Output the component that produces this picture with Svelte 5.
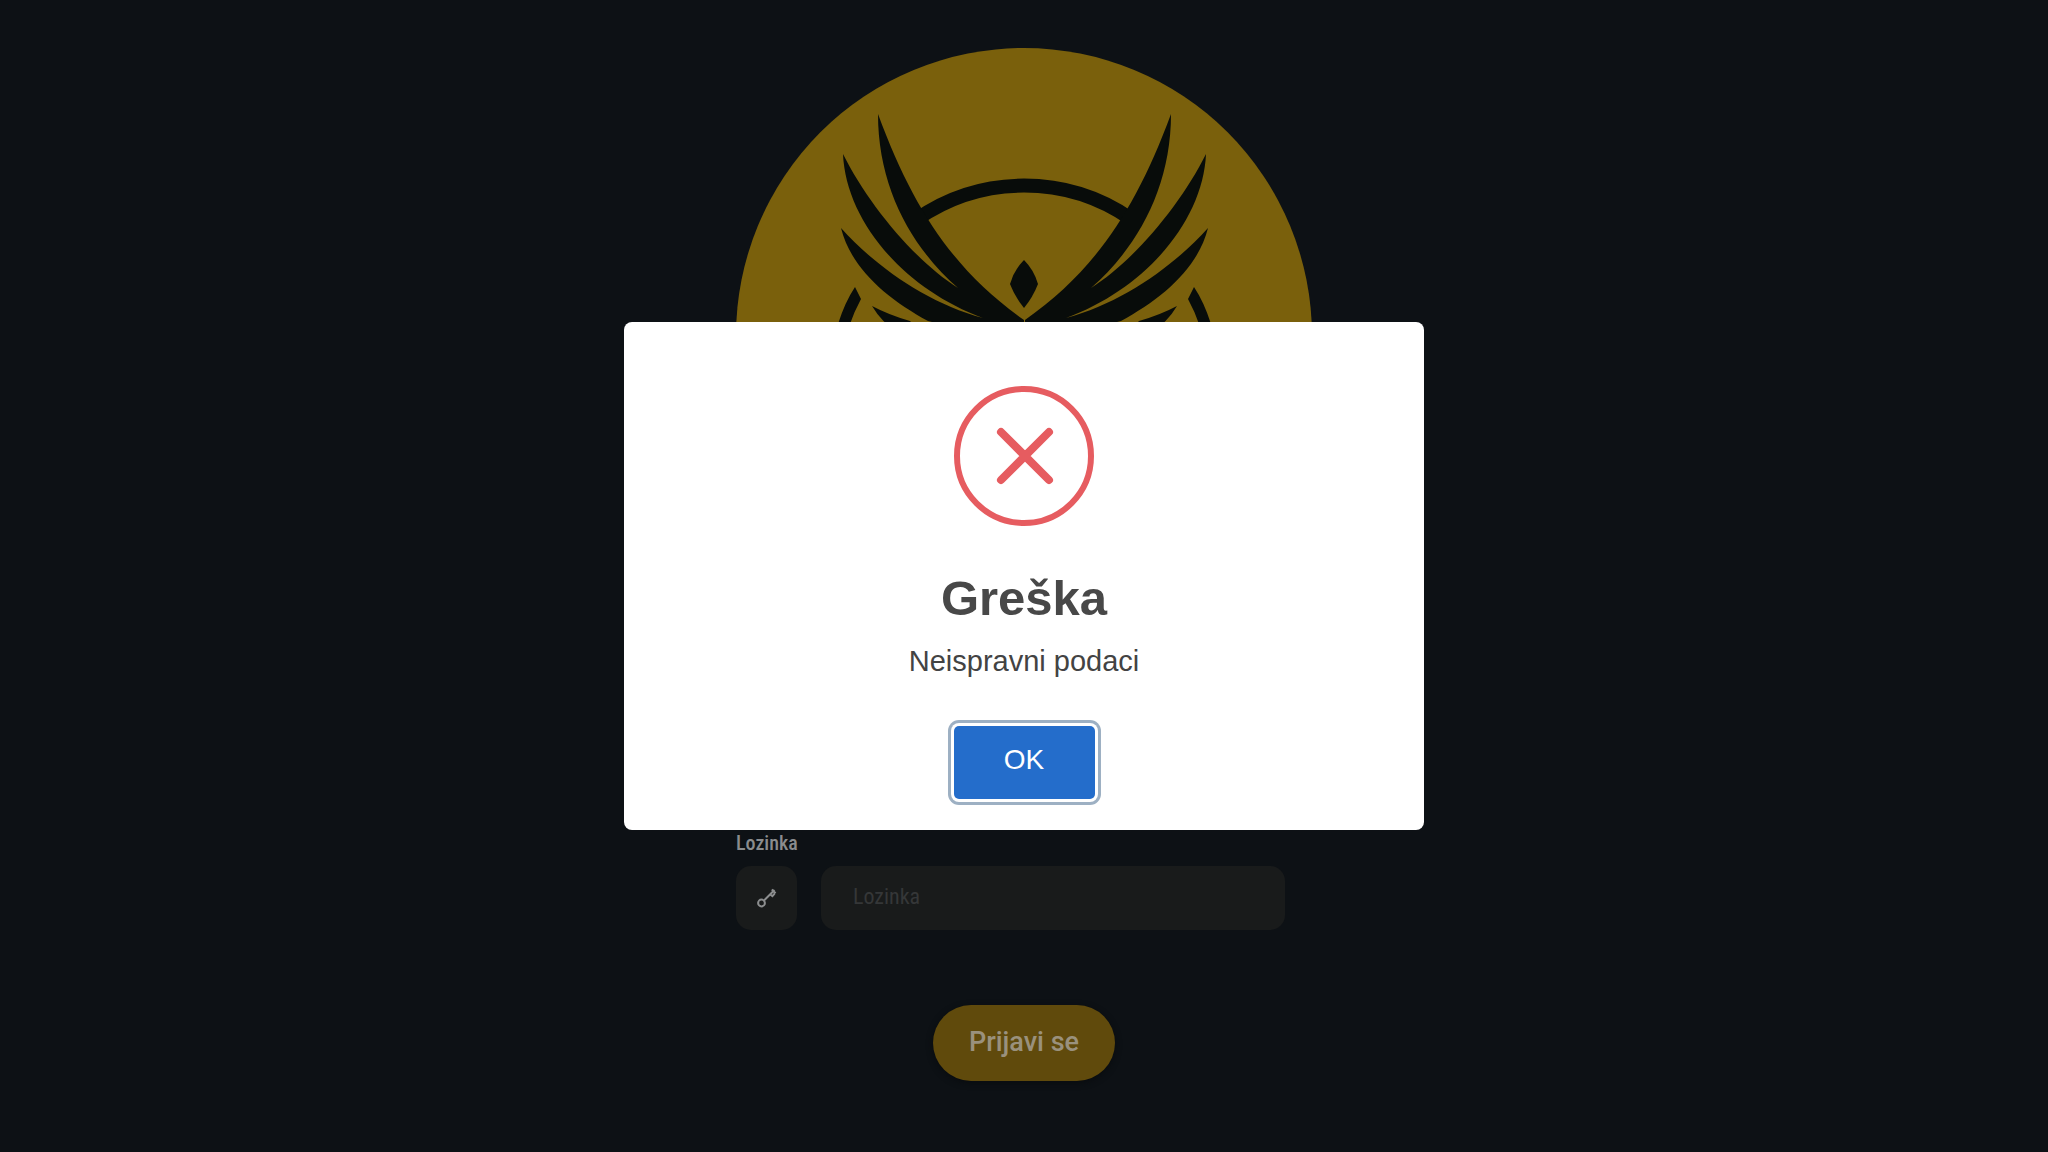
<script>
  let open = $state(true);
  let password = $state('');
</script>

{#snippet wing()}
  <path d="M142 66C142 140 176 200 222 240C178 212 132 156 107 106C110 172 166 240 247 270C190 255 137 216 105 180C115 220 150 250 192 273L240 285L288 285V272C220 224 178 164 142 66Z" />
  <path d="M136 258Q153 267 174 273L200 300Q155 290 136 258Z" />
  <path d="M119 239L125 251Q118 264 114 276L102 276Q109 254 119 239Z" />
{/snippet}

<main class="page">
  <form class="login" onsubmit={(e) => e.preventDefault()}>
    <svg class="logo" viewBox="0 0 576 576" aria-hidden="true">
      <circle class="gold" cx="288" cy="288" r="288" />
      <path class="ring" d="M181 171A188 188 0 0 1 395 171" />
      <g class="ink">
        {@render wing()}
        <g transform="matrix(-1 0 0 1 577 0)">
          {@render wing()}
        </g>
        <path d="M288 212Q298 222 302 236Q297 249 288 260Q279 249 274 236Q278 222 288 212Z" />
      </g>
    </svg>

    <div class="field">
      <label for="password">Lozinka</label>
      <div class="row">
        <span class="key">
          <svg viewBox="0 0 20 20" width="20" height="20" aria-hidden="true">
            <circle cx="4.5" cy="15" r="3.4" />
            <path d="M7 12.5L17.5 2M14.8 1.6L18.6 5.2M13 6.2L15.4 8.2L17.6 5.6" />
          </svg>
        </span>
        <input id="password" type="password" placeholder="Lozinka" bind:value={password} />
      </div>
    </div>

    <button class="submit" type="submit">Prijavi se</button>
  </form>
</main>

{#if open}
  <div class="overlay">
    <div class="modal" role="alertdialog" aria-modal="true" aria-labelledby="title" aria-describedby="message">
      <svg class="error" viewBox="0 0 140 140" aria-hidden="true">
        <circle cx="70" cy="70" r="67" />
        <path d="M47 46L95 94M95 46L47 94" />
      </svg>
      <h2 id="title">Greška</h2>
      <p id="message">Neispravni podaci</p>
      <button class="ok" type="button" onclick={() => (open = false)}>OK</button>
    </div>
  </div>
{/if}

<style>
  :global(body) {
    background: #0d1115;
  }
  .page {
    box-sizing: border-box;
    min-height: 100vh;
    padding: 48px 24px;
    display: flex;
    justify-content: center;
    font-family: 'Roboto Condensed', Roboto, sans-serif;
  }
  .login {
    width: 100%;
    max-width: 576px;
    display: flex;
    flex-direction: column;
  }
  .logo {
    display: block;
    width: 100%;
  }
  .gold {
    fill: #7a600c;
  }
  .ink {
    fill: #080c0a;
  }
  .ring {
    fill: none;
    stroke: #080c0a;
    stroke-width: 14;
  }
  .field {
    margin-top: 207px;
    padding-right: 27px;
  }
  label {
    display: block;
    font-size: 20px;
    line-height: 24px;
    font-weight: 500;
    color: #8a8c8e;
  }
  .row {
    display: flex;
    gap: 24px;
    margin-top: 11px;
  }
  .key {
    flex: none;
    width: 61px;
    height: 64px;
    border-radius: 15px;
    background: #191b1b;
    display: flex;
    align-items: center;
    justify-content: center;
  }
  .key svg {
    fill: none;
    stroke: #8c8e8f;
    stroke-width: 2;
  }
  input {
    flex: 1;
    min-width: 0;
    box-sizing: border-box;
    height: 64px;
    padding: 0 32px 4px;
    border: 0;
    border-radius: 15px;
    background: #191b1b;
    color: #8a8c8e;
    font-family: inherit;
    font-size: 22px;
  }
  input::placeholder {
    color: #353738;
    opacity: 1;
  }
  .submit {
    align-self: center;
    height: 76px;
    margin-top: 75px;
    padding: 0 36px 2px;
    border: 0;
    border-radius: 38px;
    background: #604a0c;
    box-shadow: 0 2px 6px #090c0f;
    color: #9a917d;
    font-family: Roboto, sans-serif;
    font-size: 27px;
    font-weight: 500;
  }
  .overlay {
    position: fixed;
    inset: 0;
    display: flex;
    align-items: center;
    justify-content: center;
    font-family: 'Liberation Sans', Arial, sans-serif;
  }
  .modal {
    box-sizing: border-box;
    width: 100%;
    max-width: 800px;
    padding: 64px 32px 31px;
    border-radius: 8px;
    background: #fff;
    display: flex;
    flex-direction: column;
    align-items: center;
    text-align: center;
  }
  .error {
    width: 140px;
    height: 140px;
    fill: none;
    stroke: #e65c60;
    stroke-width: 6;
  }
  .error path {
    stroke-width: 8;
    stroke-linecap: round;
  }
  h2 {
    margin: 44px 0 0;
    font-size: 49px;
    line-height: 56px;
    color: #484848;
  }
  p {
    margin: 15px 0 0;
    font-size: 29px;
    line-height: 40px;
    color: #434343;
  }
  .ok {
    width: 141px;
    height: 73px;
    margin-top: 45px;
    padding: 0 0 6px;
    border: 0;
    border-radius: 5px;
    background: #246dcb;
    box-shadow: 0 0 0 3px #fff, 0 0 0 6px #9db0c3;
    color: #fff;
    font-family: inherit;
    font-size: 28px;
  }
</style>
